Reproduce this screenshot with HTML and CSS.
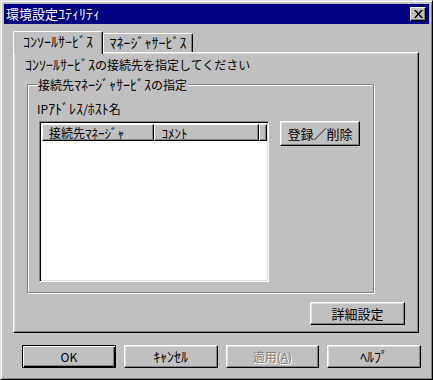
FILE: index.html
```html
<!DOCTYPE html>
<html lang="ja">
<head>
  <meta charset="UTF-8">
  <title>環境設定ﾕﾃｨﾘﾃｨ</title>
  <link rel="stylesheet" href="styles.css">
</head>
<body>
<div class="window">
  <div class="titlebar">
    <span class="title">環境設定<span class="hw">ﾕﾃｨﾘﾃｨ</span></span>
    <button class="close-btn">
      <svg width="9" height="8" viewBox="0 0 9 8"><path d="M0 0h2l2.5 3 2.5-3h2l-3.5 4 3.5 4h-2l-2.5-3-2.5 3h-2l3.5-4z" fill="#000"/></svg>
    </button>
  </div>

  <div class="tabs">
    <div class="tab active"><span class="hw">ｺﾝｿｰﾙｻｰﾋﾞｽ</span></div>
    <div class="tab"><span class="hw">ﾏﾈｰｼﾞｬｻｰﾋﾞｽ</span></div>
  </div>

  <div class="panel">
    <p class="hint"><span class="hw">ｺﾝｿｰﾙｻｰﾋﾞｽ</span>の接続先を指定してください</p>

    <fieldset class="group">
      <legend>接続先<span class="hw">ﾏﾈｰｼﾞｬｻｰﾋﾞｽ</span>の指定</legend>
      <p class="label">IP<span class="hw">ｱﾄﾞﾚｽ</span>/<span class="hw">ﾎｽﾄ</span>名</p>
      <div class="group-row">
        <div class="listview">
          <div class="list-head">
            <span class="col col-name">接続先<span class="hw">ﾏﾈｰｼﾞｬ</span></span>
            <span class="col col-comment"><span class="hw">ｺﾒﾝﾄ</span></span>
            <span class="col col-fill"></span>
          </div>
          <div class="list-body"></div>
        </div>
        <button class="btn btn-register">登録／削除</button>
      </div>
    </fieldset>

    <div class="panel-foot">
      <button class="btn btn-detail">詳細設定</button>
    </div>
  </div>

  <div class="actions">
    <button class="btn default">OK</button>
    <button class="btn"><span class="hw">ｷｬﾝｾﾙ</span></button>
    <button class="btn disabled">適用(<u>A</u>)</button>
    <button class="btn"><span class="hw">ﾍﾙﾌﾟ</span></button>
  </div>
</div>
</body>
</html>
```

FILE: styles.css
```css
body {
  margin: 0;
  background: #c0c0c0;
  font-family: "Noto Sans CJK JP", "DejaVu Sans", sans-serif;
  font-size: 12px;
  line-height: 16px;
  color: #000;
}
/* half-width katakana run a little wider in the old UI font */
.hw {
  font-size: 14px;
  line-height: 16px;
}
.window {
  width: 433px;
  height: 380px;
  box-sizing: border-box;
  background: #c0c0c0;
  border: 1px solid;
  border-color: #dfdfdf #000 #000 #dfdfdf;
  box-shadow: inset 1px 1px #fff, inset -1px -1px #808080;
  padding: 3px;
}
.titlebar {
  height: 20px;
  background: #000080;
  color: #fff;
  display: flex;
  align-items: center;
  justify-content: space-between;
  padding: 0 3px 0 2px;
}
.title {
  font-size: 13px;
  line-height: 20px;
}
.close-btn {
  width: 16px;
  height: 14px;
  padding: 0;
  display: flex;
  align-items: center;
  justify-content: center;
  background: #c0c0c0;
  border: 1px solid;
  border-color: #fff #000 #000 #fff;
  box-shadow: inset -1px -1px #808080;
}
.tabs {
  display: flex;
  align-items: flex-end;
  margin: 7px 0 0 9px;
  height: 21px;
}
.tab {
  height: 19px;
  line-height: 18px;
  box-sizing: border-box;
  padding: 0 4px;
  width: 90px;
  background: #c0c0c0;
  border: 1px solid;
  border-color: #fff #000 transparent #fff;
  border-bottom: none;
  border-radius: 2px 2px 0 0;
  box-shadow: inset -1px 0 #808080;
  text-align: center;
  white-space: nowrap;
}
.tab.active {
  height: 23px;
  margin-bottom: -2px;
  padding-bottom: 2px;
  position: relative;
  z-index: 1;
  line-height: 20px;
}
.panel {
  margin-left: 9px;
  width: 406px;
  height: 281px;
  box-sizing: border-box;
  border: 1px solid;
  border-color: #fff #000 #000 #fff;
  box-shadow: inset -1px -1px #808080, inset 1px 1px #dfdfdf;
  padding: 3px 13px 0 11px;
}
.hint {
  margin: 0;
  height: 16px;
  white-space: nowrap;
}
.group {
  margin: 4px 0 0 2px;
  width: 347px;
  min-width: 0;
  box-sizing: border-box;
  padding: 0 0 10px 9px;
  border: 1px solid #808080;
  box-shadow: inset 1px 1px #fff, 1px 1px #fff;
}
.group legend {
  padding: 0 1px;
  height: 16px;
  background: #c0c0c0;
}
.label {
  margin: 8px 0 0;
  height: 16px;
}
.group-row {
  display: flex;
  align-items: flex-start;
  margin-top: 5px;
  padding-left: 2px;
}
.listview {
  width: 230px;
  height: 161px;
  box-sizing: border-box;
  border: 1px solid;
  border-color: #808080 #fff #fff #808080;
  box-shadow: inset 1px 1px #000, inset -1px -1px #dfdfdf;
  padding: 2px 1px 1px 2px;
  background: #fff;
  display: flex;
  flex-direction: column;
}
.list-head {
  display: flex;
  height: 17px;
  background: #c0c0c0;
}
.col {
  box-sizing: border-box;
  height: 17px;
  padding-left: 6px;
  border: 1px solid;
  border-color: #fff #000 #000 #fff;
  box-shadow: inset -1px -1px #808080;
  white-space: nowrap;
  display: flex;
  align-items: center;
  font-size: 12px;
  line-height: 14px;
}
.col .hw { font-size: 13px; line-height: 14px; }
.col-name { width: 115px; }
.col-comment { width: 107px; }
.col-fill { flex: 1; }
.list-body {
  flex: 1;
  background: #fff;
}
.btn {
  font-family: inherit;
  font-size: 12px;
  line-height: 16px;
  color: #000;
  background: #c0c0c0;
  height: 23px;
  padding: 0;
  box-sizing: border-box;
  border: 1px solid;
  border-color: #fff #000 #000 #fff;
  box-shadow: inset -1px -1px #808080, inset 1px 1px #dfdfdf;
  white-space: nowrap;
}
.btn-register {
  margin-left: 11px;
  width: 80px;
  height: 25px;
  font-size: 13px;
}
.panel-foot {
  display: flex;
  justify-content: flex-end;
  margin-top: 9px;
}
.btn-detail {
  width: 95px;
  font-size: 13px;
}
.actions {
  display: grid;
  grid-template-columns: repeat(4, 1fr);
  gap: 8px;
  margin-top: 12px;
  padding: 0 8px 0 18px;
}
.btn.default {
  border: 1px solid #000;
  box-shadow: inset 1px 1px #fff, inset -1px -1px #000, inset -2px -2px #808080;
}
.btn.disabled {
  color: #808080;
  text-shadow: 1px 1px #fff;
}
.btn.disabled u {
  text-decoration-color: #808080;
}
```
